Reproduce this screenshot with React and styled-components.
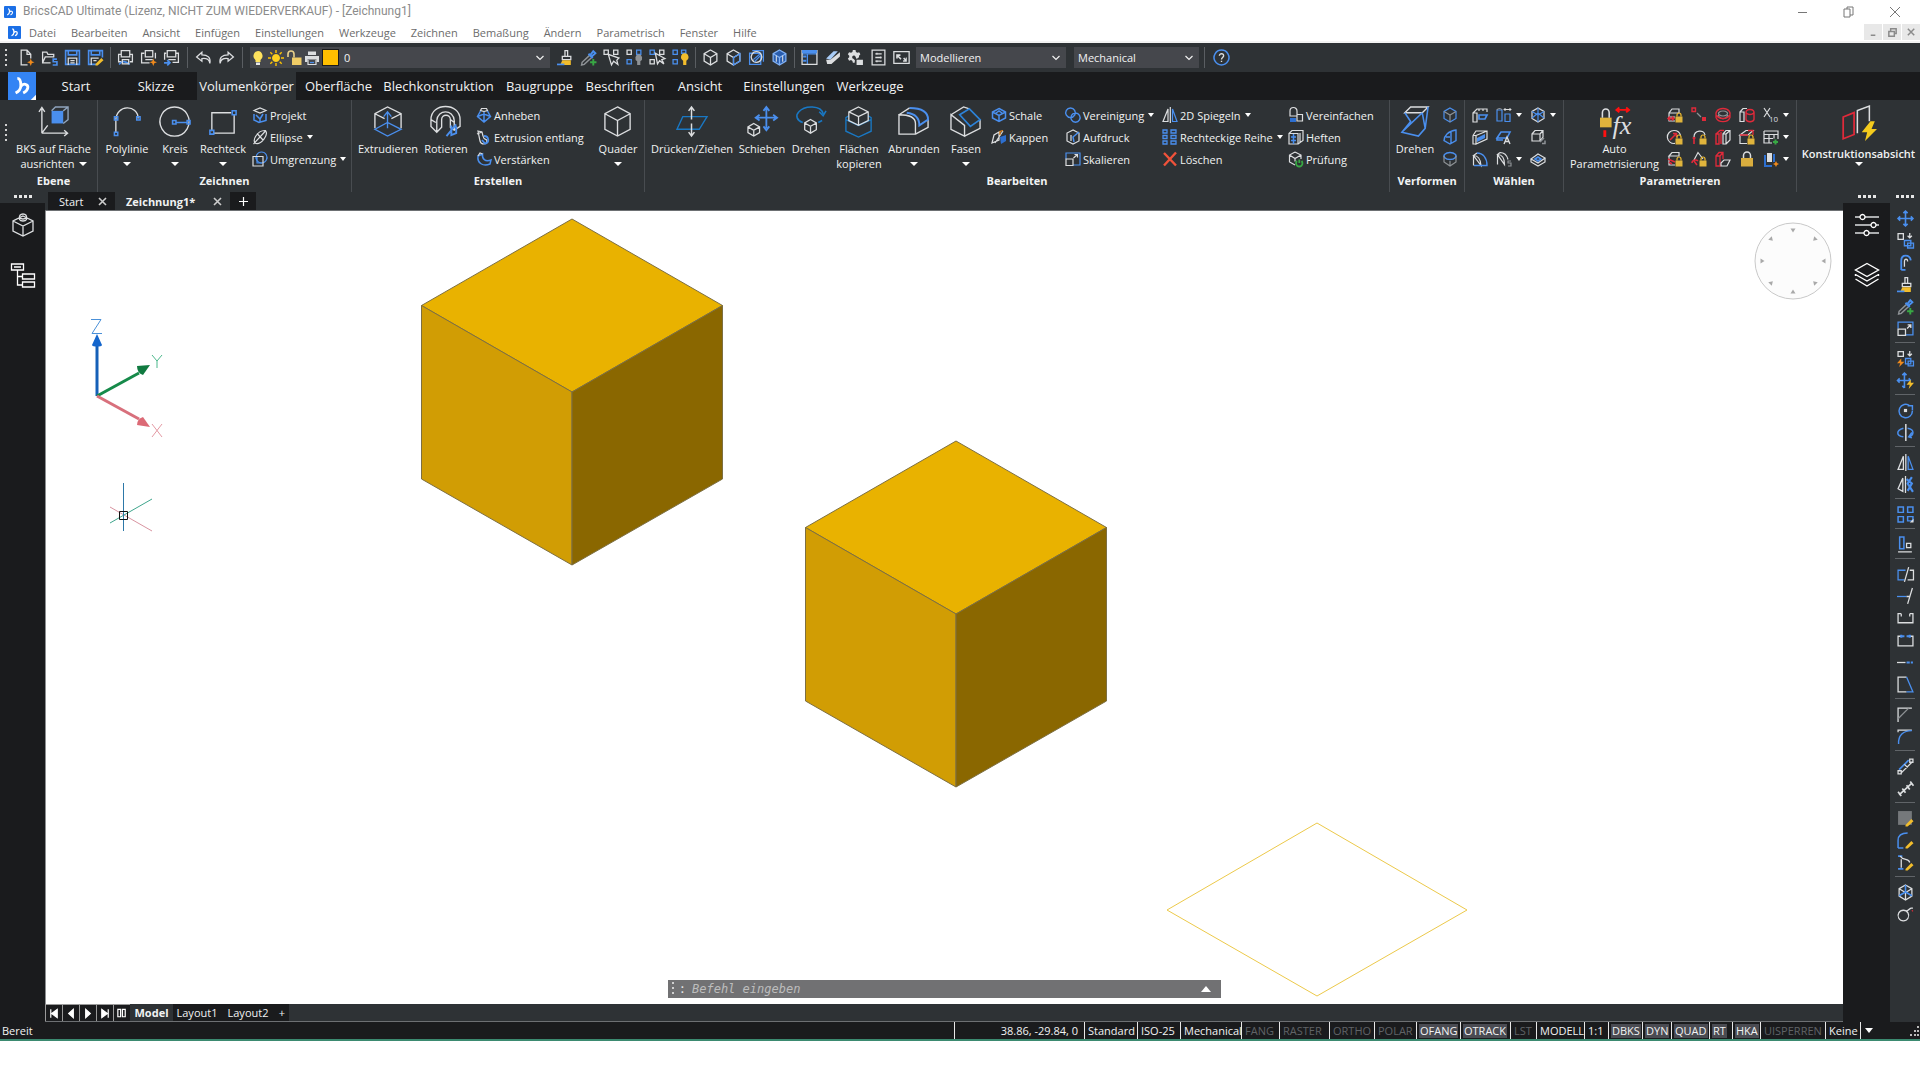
import React from "react";
import styled, { createGlobalStyle, css } from "styled-components";

const W = "#dcdee0";
const B = "#4a8fee";
const D = "#2d6fd0";
const Y = "#f2bd2c";
const O = "#f08a1c";
const R = "#e02a3a";
const G = "#38a844";
const K = "#8e9296";

const color = {
  bar: "#2e3235",
  dark: "#1a1b1d",
  field: "#45474c",
  line: "#484c50",
  text: "#f1f2f3",
};

const s = (stroke, d, w = 1.2) => ({ stroke, d, w });
const f = (fill, d) => ({ fill, d });

/* ---------- glyph data, 16 x 16 unless listed in LARGE ---------- */
const CUBE = "M8 1 14 4.4V11.4L8 15 2 11.4V4.4ZM2 4.4 8 8 14 4.4M8 8V15";
const LOCK = [f("#e0b43c", "M8.5 9.5h7v6h-7z"), s(Y, "M10 9.5V8a2 2 0 0 1 4 0v1.5")];
const PENCIL = [f(Y, "M8 14 13.500 8.500 15.500 10.500 10 15.500H8z")];
const BOLT = f(O, "M4 8 0 12.500h3L2 16l5-5H4z");

const GLYPHS = {
  new: [s(W, "M12 9V5L8.500 1H3v14h6M8.500 1v4H12"), f(O, "M12 9l1 2.500 2.500 1-2.500 1-1 2.500-1-2.500-2.500-1 2.500-1z")],
  open: [s(W, "M9 13H1.500V3h4l1 2H12v2.500M1.500 13 4 7.500h8.500"), s(B, "M15 9.500h-3.500V12H15v3h-4", 1.500)],
  save: [s(B, "M1.500 1.500h13v13h-13zM4 1.500v4h8v-4", 1.500), s(W, "M4 15V8.500h8V15M6 11h4M6 13h4")],
  saveas: [s(B, "M14.500 8V1.500h-13v13H9M4 1.500v4h8v-4", 1.500), s(W, "M4 15V8.500h7M6 11h3"), ...PENCIL],
  preview: [s(W, "M4 1.500h8v6H4zM4 5H1.500v7H4M12 5h2.500v7H12"), s(B, "M2 14.500c3-4 6-3 10 0", 1.500), s(W, "M5 10h6v4H5z")],
  publish: [s(W, "M5 1.500h7v6H5zM4 4H1.500v9H9M5 10h7M14.500 3.500V9"), f(O, "M12.500 9l1 2.500 2.500 1-2.500 1-1 2.500-1-2.500-2.500-1 2.500-1z")],
  plot: [s(W, "M4 1.500h8v6H4zM3 4H1.500v6M12 4h2.500v8.500H9M5 10h7"), s(B, "M1 13h5M4 10.500 6.500 13 4 15.500", 1.600)],
  undo: [s(W, "M6.500 3 1.500 7.500l5 4V9c4-.5 7 .5 7.500 4.500C15 8 12 5.500 6.500 5.500z")],
  redo: [s(W, "M9.500 3l5 4.500-5 4V9C5.500 8.500 2.500 9.500 2 13.500 1 8 4 5.500 9.500 5.500z")],
  bulb: [f("#ffe25e", "M8 1a5 5 0 0 0-2.500 9v2h5v-2A5 5 0 0 0 8 1z"), f("#e8e8e8", "M6 12.500h4V15H6z")],
  sun: [f("#ffd21f", "M8 4a4 4 0 1 0 .01 0z"), s("#ffc400", "M8 0v3M8 13v3M0 8h3M13 8h3M2.300 2.300l2 2M11.700 11.700l2 2M2.300 13.700l2-2M11.700 4.300l2-2", 1.400)],
  unlock: [f("#f0cc66", "M6 7.500h9.500V15H6z"), s("#e9d08a", "M8 7.500V4a3 3 0 0 0-6 0v3", 1.600)],
  printer: [f(W, "M1 6h14v6h-2.500V9.500h-9V12H1zM4 1.500h8v3.500H4z"), s(W, "M4 10v4.500h8V10"), s(B, "M6 12.500h4")],
  brush: [s(W, "M7.500 7V1.500H10V7M5 7h8v3H5z"), f(Y, "M5 10.500h8V15H3z"), s(B, "M0 14.500h7", 1.600)],
  dropper: [s(K, "M9 6 2 12.500 1.500 15l2.500-.5L11 8", 1.400), s(B, "M8 4.500 12 8.500M9.500 6l3-4 2 2-3.500 3", 1.800), s(G, "M12.500 9.500v6M9.500 12.500h6", 1.800)],
  selA: [s(W, "M1 1h4v4H1zM10 1h4v4h-4z"), s(W, "M5 5l3 10 2-3.500 4 3-1-4 2-2z")],
  selB: [s(W, "M1 1h4v4H1z"), s(B, "M10 1h4v4h-4zM1 10h4v4H1z"), f(K, "M12 5a3.500 3.500 0 0 0-1.500 6.500V15h3v-3.500A3.500 3.500 0 0 0 12 5z")],
  selC: [s(B, "M1 1h4v4H1z"), s(W, "M10 1h4v4h-4zM1 10h4v4H1zM6 4l2 10 2-3 4 3-2-4 3-1z")],
  selD: [s(B, "M1 1h4v4H1zM9 1h4v3H9zM1 10h4v4H1z"), f(Y, "M12 4a3.700 3.700 0 0 0-1.500 7V15h3v-4A3.700 3.700 0 0 0 12 4z")],
  cube: [s(W, CUBE)],
  cubeHalf: [s(W, CUBE), s(B, "M8 15 14 11.400V4.400L8 8z")],
  cubeSphere: [s(B, "M1.500 4v10.500H12V4zM4 1.500h10.500V12"), s(W, "M8 2.500a5 5 0 1 0 .01 0z"), s(B, "M5 10l6-5M6 12l6-6")],
  cubeBlue: [f("#2a5dad", "M8 1 14 4.400V11.400L8 15 2 11.400V4.400Z"), s("#7fb0f5", CUBE), s(W, "M5 6v6M11 6v6", 1)],
  layout: [s(B, "M1 4.500h14M6 4.500V15"), s(W, "M1 1.500h14v13H1z"), f(B, "M1 1h14v3H1zM2 6h3v2H2zM2 10h3v2H2z")],
  eraser: [f("#a9cdf8", "M2 9 9 2h4L6 10z"), f(W, "M2 10h4l9-7v4l-8 7H3z")],
  gear: [f(W, "M5.500 1h2.500l.4 1.800 1.300.8L11.400 3l1.200 2-1.300 1.300v1.400L9 9.500l-1-2.200a1.600 1.600 0 1 0-2 1.900l1.500 1.300-.3 2.500H5.500l-.4-1.800-1.300-.8L2 11 .8 9l1.300-1.300V6.300L.8 5 2 3l1.800.6 1.300-.8zM9 10h6v5H9z")],
  sheet: [s(W, "M2 1h12v14H2zM5 4.500h6M5 8h6M5 11.500h6M6.500 3.500v2M10 7v2M6.500 10.500v2")],
  frame: [s(W, "M.800 2.500h14.400v11H.8z"), f(W, "M3 5h4v1.500H5.500L8 9 7 10 4.500 7.500V9H3zM13 12H9.500v-1.500H11L9.500 9l1-1 1.500 1.500V8H13z")],
  help: [s(B, "M8 1a7 7 0 1 0 .01 0z", 1.400), s(W, "M6 6.300C6 3.700 10.300 4 10 6.500 9.800 8 8 8 8 9.800M8 11v1.300", 1.300)],
  project: [s(W, "M2 3.500 8 1l6 2.500L8 6z"), s(B, "M2 7v6l5 2.500 7-2V7M4 8l4 4 3-5M8 12v3", 1.500)],
  ellipse: [s(W, "M13.500 1.500C17 6 9 15.500 4 14.500-1 13 5 1 13.500 1.500ZM1.500 15 14 1.500M5 4.500l6 6.500")],
  boundary: [s(B, "M9.500 1a5.500 5.500 0 1 0 .01 0z"), s(W, "M1 5.500h10V15H1z"), s(B, "M5 6v6h5")],
  loft: [s(W, "M5.500 1.500h5l1 2-3.500 1-3.500-1z"), s(B, "M4.500 4 1.500 9.500 8 15l6.500-5.500L11.500 4M1.500 9.500 8 7l6.500 2.500M8 5v10", 1.500)],
  sweep: [s(W, "M2 2l4 1 1 4c1 5 4 2 4 5 0 4-6 4-7 0z"), s(B, "M8 7c5 0 6 7 1 7.500L6 11", 1.800), s(W, "M1 5l5-2")],
  thicken: [s(B, "M2 5c-1 7 5 11 12 8l1-4C9 11 6 8 6.500 3z", 1.500), s(W, "M2 5l2-3 2.500 1")],
  shell: [s(B, "M8 1.500 14.500 5v6L8 14.500 1.500 11V5ZM1.500 5 8 8.500 14.500 5M8 8.500v6M5 6l3-2 3 2", 1.500)],
  slice: [s(W, "M1 14 3 6l5-3v8zM4 14 12 2"), f(D, "M9 8l6-2v6l-5 3z"), s(O, "M9 6V2.500l3-1")],
  union: [s(B, "M5.500 1a4.800 4.800 0 1 0 .01 0zM10.500 6a4.600 4.600 0 1 0 .01 0z", 1.400)],
  imprint: [s(W, "M8 1 2 4v8l6 3 6-3V4ZM6 6v6"), s(B, "M14 3 8 8l1 5", 1.500)],
  scale: [s(B, "M1 8V2h14v12H8"), s(W, "M1 8h7v6.500H1zM8.500 7l4-3.500M9.500 3.500h3v3")],
  mirror: [s(W, "M6 2v12.500H1zM8.300 0v16"), s(B, "M10.500 2v12.500H15z")],
  array: [s(B, "M1 1h4v3H1zM9 1h5v3H9zM1 6.500h4v3H1zM9 6.500h5v3H9zM1 12h4v3H1zM9 12h5v3H9z", 1.300)],
  cross: [s("#f0523a", "M2 2 14 14.500M14 1.500 2 14.500", 2.400)],
  simplify: [s(W, "M2 9V4a3.500 3.500 0 0 1 7 0v5zM9 7.500h5.500V14H9z"), f(D, "M2 11h6v4H2z")],
  stitch: [s(W, "M1 4.500h9V15H1zM1 4.500 4 1.500h11v10L10 15M12 4v9"), s(B, "M5.500 5v10M3 8h5M3 11.500h5", 1.500)],
  check: [s(W, "M7 1 13 4v4M7 1 1.500 4v7L7 14M1.500 4 7 7.500 13 4M7 7.500v3"), s(G, "M9 10a3.200 3.200 0 1 0 4.500 0M11.300 8.500v3.500", 1.800)],
  defCube: [s(B, "M8 1 14 4.400V11.400L8 15 2 11.400V4.400Z"), s(K, "M2 4.400 8 8 14 4.400M8 8V15")],
  defCut: [s(B, "M14 1C6 2 2 7 2 11.500L8 15l6-3.500zM9 3v11M4 8h4", 1.400)],
  defCyl: [s(B, "M8 1.500a6 3.500 0 1 0 .01 0z", 1.400), s(K, "M2 5v6l6 4 6-4V5M8 10v5")],
  faceA: [s(W, "M1 6h4v9H1zM1 6l4-4h10v3M5 8V6M7 2v2M11 2v2"), s(B, "M7 8h8l-2 4H7z", 1.700)],
  faceB: [s(B, "M1 3h5v11H1zM9 7h5v7.500H9z"), s(K, "M1 3c1-2 4-2 5 0"), s(W, "M8 2.500h7M9.500 1 8 2.500 9.500 4M13.500 1 15 2.500 13.500 4", 1)],
  faceC: [s(W, "M8 1 14 4.400V11.400L8 15 2 11.400V4.400Z"), s(B, "M2 4.400 8 8 14 4.400M8 8V15M8 1v5l6 5M8 6l-6 5")],
  faceD: [s(W, "M1 6.500h3V15l11-5V2H4L1 6.500M4 6.500 15 2M1 6.500V15h3"), f(B, "M5 9l8-4v4l-8 4z")],
  faceE: [s(B, "M1 9 5 3h9l-3 6zM1 9v2h6", 1.600), s(W, "M8 15l3-7 3 7M9 12.500h4", 1.300)],
  faceF: [s(W, "M2 5h8v7H2zM2 5l3-3.500h8V8l-3 4M10 5l3-3.500"), s(K, "M10 13l4-4M12 14.500h3v-3", 1.500)],
  faceG: [s(W, "M1.500 14.500v-10L5 2M1.500 4.500c5 0 7 4 7.500 10z"), s(B, "M5 2c6 0 10 5 10 12.500H9M2 14.500h7", 1.400)],
  faceH: [s(W, "M1.500 13.500v-10L4 1.500M1.500 3.500c5 0 7 4 7 10zM4 1.500c5 0 7 3 8 7"), s(K, "M15 10h-3v2h3v3h-3")],
  faceI: [s(W, "M1 8 8 3l7 4-7 5zM1 8v3l7 4 7-4V7"), s(B, "M5 8l3-2 3 2-3 2z", 1.600)],
  lockFace: [s(W, "M2 6h10V2H5L2 6v8h6M2 10h6"), s(R, "M1 11.500h5M3 9.500l-2 2 2 2M5 9.500l2 2-2 2", 1.500), ...LOCK],
  link: [s(R, "M1 1h3.500v3.500H1z", 1.400), s(K, "M6 6l4 4"), f(R, "M11 10h4v4h-4z")],
  ring: [s(K, "M8 4a4.500 2.500 0 1 0 .01 0zM3 8c2 5 8 5 10 0"), s(R, "M8 1.500a7 5 0 1 0 .01 0zM1 6.500v4c2 5.500 12 5.500 14 0v-4", 1.300)],
  cylLock: [s(W, "M1 5h4v9.500H1zM1 5l3-3.500h4M5 5v9"), s(R, "M11 2.500a4 2.500 0 1 0 .01 0zM7 5v7.500c1 3 7 3 8 0V5", 1.400)],
  circLock: [s(W, "M7 1.500a6.500 6.500 0 1 0 1 12.900"), s(W, "M7 1.500c4 0 6 3 6.500 5"), s(R, "M3 11l6-6M6 4.500h3.500V8", 1.500), ...LOCK],
  arcLock: [s(W, "M3 8c0-7 10-8 11-2"), s(R, "M3 8v7M1.500 9h3", 1.600), ...LOCK],
  walls: [s(R, "M1 5h3v10H1zM1 5l4-3.500h4M6 3v12", 1.400), s(W, "M8 5h3v10H8zM8 5l3-3.500h4V11l-4 4M11 5l4-3.500")],
  boxLock: [s(W, "M1 6h8l5-4.500H7ZM1 6v8.500h7"), s(R, "M1 6h8M9 1.500h5V6", 1.300), ...LOCK],
  table: [s(W, "M1 2h14v8M1 2v12h8M1 5.500h14M1 9.500h9M6 5.500V14M11 5.500v4"), s(G, "M10 13h5M12.500 10.500v5", 2)],
  planeLock: [s(W, "M2 5h10V1.500H5ZM2 5v9h6"), s(R, "M1 8l7 3M5 13l-3-2", 1.600), ...LOCK],
  cornerLock: [s(W, "M3 9 7 1.500 12 8"), s(R, "M1 12c0-3 4-4 6-2M3 10l3 4", 1.500), ...LOCK],
  wallBox: [s(R, "M1 5h4v10H1zM1 5l3-3.500h4V8M5 5l3-3.500", 1.300), s(W, "M6 12l3-3h6l-3 6H6z")],
  bigLock: [f("#d9ad3e", "M2 7h12v8.500H2z"), s(W, "M4.500 7V4.500a3.500 3.500 0 0 1 7 0V7", 1.500)],
  column: [s(D, "M2 4v11h7M11 3v8", 2), f(W, "M4 2h5v9H4z"), f(O, "M13 10l1 2 2 1-2 1-1 2-1-2-2-1 2-1z")],
  move: [s(B, "M8 1v14M1 8h14M6 3l2-2 2 2M6 13l2 2 2-2M3 6 1 8l2 2M13 6l2 2-2 2", 1.500)],
  copy: [s(W, "M1 1.500h5V7H1zM12 1v4M10 3.500l2 2 2-2"), s(B, "M7 8h6v5H7zM10 10.500h5.500V15H10z", 1.300)],
  offset: [s(B, "M4 15V6c0-6 8-6 9 0M4 15h4", 1.700), s(W, "M7 12V7c0-3 3-3 3 0")],
  scaleBox: [s(B, "M1 8V2h14v12H8"), s(W, "M1 8.500h7v6H1zM9.500 8l3.500-3.500M10 4.500h3v3")],
  copyBolt: [s(W, "M1 1.500h5V6H1zM12 1v4M10 3.500l2 2 2-2"), s(B, "M8 8h5v5H8zM10.500 10.500h5V15h-5z"), BOLT],
  moveBolt: [s(B, "M7 1v14M.5 8h12M5 3l2-2 2 2M5 13l2 2M2.500 6l-2 2 2 2M11 6l2 2", 1.500), f(Y, "M13 7l-4 5h3l-1 4 5-6h-3z")],
  rotate: [s(B, "M12 3.500a6.300 6.300 0 1 0 2.500 5M10 3.500h4.500V8", 1.400), f(W, "M6.500 6.500h3v3h-3z")],
  rotate3d: [s(B, "M6 4C-1 6-1 11 6 12M10 4c7 1 6 7 1 8M14 8l-3 4 3 1", 1.400), s(W, "M8.300 0v16", 1.400)],
  mirror3d: [s(W, "M5.500 2v12.500L1 12zM8 0v16"), s(B, "M9 3l5 4-4 7M14 1l-4 6 5 8", 2)],
  arrayPolar: [s(B, "M1 1h5v5H1zM10 1h5v5h-5zM1 10h5v5H1zM10 10h5v4h-5z", 1.400), f(W, "M15.500 12v3.500H12z")],
  align: [s(B, "M2.500 1h4v11h-4z", 1.400), s(W, "M9 7h4v4H9zM1 15h13")],
  trimBox: [s(B, "M8 4H1v9h6"), s(W, "M11 1 7 15M12 4h3.500v9H10")],
  trim: [s(B, "M0 8h9"), s(W, "M14.500 0 10 15M9 8h3")],
  extend: [s(W, "M4 3.500H1V12h14V3.500h-3M4 3.500V6M12 3.500V6")],
  extendBlue: [s(W, "M4 4H1v9h14V4h-3"), s(B, "M4 4h3M9 4h3M4 2.500v3M12 2.500v3", 2)],
  lengthen: [s(W, "M0 8h8"), s(B, "M9 8h3M13 8h2", 1.800)],
  stretch: [s(W, "M9 1H1v14h8"), s(B, "M9 1l6 14H9", 1.200)],
  chamfer: [s(W, "M1 15V2h13"), s(K, "M1 12 11 2")],
  fillet: [s(W, "M1 4V2h13"), s(B, "M1.500 15C1 7 6 2.500 14 2.500", 1.300)],
  break: [s(B, "M2 11 11 2", 1.600), s(W, "M4 14 14 4M1 12h3v3H1zM12 1h3v3h-3zM7 6l3 3")],
  divide: [s(W, "M2 14 14 3M1 11l3 4M5 8l3 4M9 5l3 4M12.500 1.500l3 4", 1.600)],
  hatch: [f("#75787b", "M1 1h13v13H1z"), ...PENCIL],
  filletEdit: [s(B, "M1 15V8c0-5 4-7 9-7M1 15h5", 1.400), ...PENCIL],
  plineEdit: [s(B, "M1 2h4M1 14h5", 1.500), s(W, "M3 2c3 5 8 1 9 6M4 5v8"), ...PENCIL],
  solidEdit: [s(W, CUBE), s(B, "M2 11 8 7.500 14 11M8 1v7", 1.500)],
  balloon: [s(W, "M6 4a5 5 0 1 0 .01 0zM9 5l4-3M13 2h2"), s(R, "M14 4l1 1", 1)],
};

const LARGE = {
  ucs: [s(W, "M4 28V3M1 6 4 1.500 7 6M4 28h26M27 25l3.500 3-3.500 3M4 28l6-8", 1.400), f(B, "M14 5h12v13H14z"), s("#8fa4bd", "M14 5 18 1h13v13l-5 4M26 5l5-4", 1.400)],
  polyline: [s(W, "M5 27V15C5-2 28-2 28 13", 1.400), s(B, "M3.500 11h3.500v3.500H3.500zM26.500 11H30v3.500h-3.500zM3.500 27H7v3.500H3.500z", 1.500)],
  circle: [s(W, "M16 1a15 15 0 1 0 .01 0z", 1.400), s(B, "M14 15h3.500v3.500H14zM29 15h3v3.500h-3zM18 17h11", 1.600)],
  rect: [s(W, "M5 26V7h20M28 9v19H7", 1.400), s(B, "M26 5h4v4h-4zM3 25h4v4H3z", 1.600)],
  extrude: [s(W, "M3 23V8L16 1 30 8v15M3 8l10 5M30 8l-10 5", 1.400), s(B, "M16 23V7M12 11l4-5 4 5M3 24l13-7 14 7-14 7z", 1.400)],
  revolve: [s(W, "M1 21V14C1-4 31-4 31 14v7l-6 4-4-3v-8c0-6-9-6-9 0v8l-5 5zM7 26V15C8 3 24 3 25 15v10M1 14l5 3M21 14l4 3", 1.400), s(B, "M17 31l10-12M22 20v10l5-2v-7", 2)],
  box: [s(W, "M16 1 29 8v16l-13 7L3 24V8ZM3 8l13 7 13-7M16 15v16", 1.400)],
  push: [s("#1978c4", "M7 11h25l-8 13H1z", 1.400), s(W, "M16 14V2M13 5l3-4 3 4M16 18v12M13 27l3 4 3-4", 1.500)],
  shift: [s(B, "M21 2v21M11 12h21M18 5l3-4 3 4M18 21l3 4 3-4M14 9l-4 3 4 3M28 9l4 3-4 3", 1.900), s(W, "M8 18l6 3.500v6L8 31l-6-3.500v-6ZM2 21.500 8 25l6-3.500M8 25v6", 1.300)],
  turn: [s("#1978c4", "M8 17C2 15 0 10 4 6 10-1 27-1 29 8M25 6l4 4 3-5M24 17l4-2", 1.600), s(W, "M16 14l6 3.500v7L16 28l-6-3.500v-7ZM10 17.500l6 3.500 6-3.500M16 21v7", 1.300)],
  facecopy: [s("#1978c4", "M6 10 3 12v14l13 6 13-6V12l-3-2M3 14l13 6 13-6", 1.400), s(W, "M16 1 26 6v9l-10 5L6 15V6ZM6 6l10 5 10-5M16 11v9", 1.300)],
  round: [s(W, "M1 9v20h17V18c0-5-5-9-17-9ZM1 9 12 2M18 29l13-7V14", 1.400), s(B, "M12 2c12 0 19 4 19 12l-9 6c0-7-4-12-13-13", 2)],
  chamfer: [s(W, "M1 9v15l14 7V20ZM1 9 14 1l6 2M15 31l16-8V14", 1.400), s("#2d83d8", "M20 3 31 14l-10 7L10 9z", 1.700)],
  twist: [s(W, "M6 7 12 1h18l-6 6z", 1.400), s(B, "M6 7 12 16 3 27l17 4 7-8L30 1M24 7 3 27M27 23 24 7", 1.600)],
  auto: [f("#e0b43c", "M1 12h12v10H1z"), s(W, "M3.500 12V7a3.500 4 0 0 1 7 0v5", 1.600), s("#ff1010", "M18 4h13M21 1.500 18 4l3 2.500M28 1.500 31 4l-3 2.500", 2), s("#ff1010", "M6 25v7", 3)],
  intent: [s(R, "M2 11l10-4v20L2 31z", 1.600), s(W, "M15 26V5l11-4v14", 1.400), f("#f4cb1d", "M27 15l-8 10h5l-2 8 11-11h-5l3-7z")],
};

/* ---------- primitives ---------- */
const Global = createGlobalStyle`
  *, *::before, *::after { box-sizing: border-box; }
  body { margin: 0; background: #fff; }
  button, input, select { font: inherit; color: inherit; }
  button { border: 0; padding: 0; background: none; cursor: default; }
`;

const Svg = styled.svg`
  display: block;
  flex: none;
  fill: none;
  overflow: visible;
`;

function Glyph({ name, size = 17 }) {
  const large = LARGE[name] && size > 20;
  const shapes = large ? LARGE[name] : GLYPHS[name];
  return (
    <Svg width={size} height={size} viewBox={large ? "0 0 33 33" : "0 0 16 16"} aria-hidden="true">
      {shapes.map((p, i) => (
        <path key={i} d={p.d} fill={p.fill || "none"} stroke={p.stroke} strokeWidth={p.w} />
      ))}
      {name === "auto" && (
        <text x="14" y="29" fill={W} fontFamily="Liberation Serif, serif" fontStyle="italic" fontSize="27">fx</text>
      )}
    </Svg>
  );
}

const Caret = styled.span`
  width: 0;
  height: 0;
  flex: none;
  margin: 0 ${(p) => p.$gap || 0}px;
  border: solid transparent;
  border-width: 4px ${(p) => (p.$gap ? 3 : 4)}px 0;
  border-top-color: #fff;
`;

const Page = styled.div`
  min-height: 100vh;
  padding-bottom: 39px;
  display: flex;
  flex-direction: column;
  background: #fff;
  color: ${color.text};
  font: 11px/15px "Open Sans", "Noto Sans", sans-serif;
`;

/* ---------- title and menu ---------- */
const TitleBar = styled.header`
  display: flex;
  align-items: center;
  height: 23px;
  padding: 0 14px 0 4px;
  gap: 7px;
  color: #8b8b8b;
`;

const Title = styled.h1`
  flex: 1;
  margin: 0;
  font-family: Roboto, "Open Sans", sans-serif;
  font-size: 12px;
  font-weight: 400;
`;

const WindowButtons = styled.div`
  display: flex;
  gap: 24px;
  button { width: 22px; height: 16px; display: grid; place-items: center; }
`;

const MenuBar = styled.nav`
  display: flex;
  align-items: center;
  gap: 1px;
  height: 20px;
  padding-left: 8px;
  color: #6c6c6c;
  border-bottom: 2px solid #f3f3f3;
`;

const MenuItem = styled.button`
  padding: 0 7px;
`;

const MdiButtons = styled.div`
  display: flex;
  gap: 1px;
  margin-left: auto;
  button { width: 18px; height: 16px; background: #e8e8e8; display: grid; place-items: center; }
`;

const LogoBox = styled.span`
  display: block;
  width: ${(p) => p.$size}px;
  height: ${(p) => p.$size}px;
  background: ${(p) => (p.$plain ? "transparent" : "#1b6fe6")};
  border-radius: 1px;
  flex: none;
`;

function Logo({ size, plain }) {
  return (
    <LogoBox $size={size} $plain={plain}>
      <Svg width={size} height={size} viewBox="0 0 24 24" aria-hidden="true">
        <path d="M8 5.500C11 5.500 11 9 11 11.500 11 15 8.500 17 6.500 18M11 12.500c2-3.500 6.500-2 6 1-.4 2.500-3 4-4 4.500" stroke="#fff" strokeWidth="2.400" />
        {plain && <path d="M24 19.500V24h-4.500z" fill="#fff" />}
      </Svg>
    </LogoBox>
  );
}

/* ---------- quick access ---------- */
const QuickBar = styled.div`
  display: flex;
  align-items: center;
  height: 29px;
  background: ${color.bar};
`;

const Grip = styled.span`
  flex: none;
  ${(p) =>
    p.$across
      ? css`width: 18px; height: 3px; margin: ${p.$margin || "0"};
          background: repeating-linear-gradient(90deg, #e6e6e6 0 3px, transparent 3px 5px);`
      : css`width: 2px; height: ${p.$h || 17}px; margin: ${p.$margin || "0"};
          background: repeating-linear-gradient(180deg, #d0d0d0 0 2px, transparent 2px 5px);`}
`;

const ToolButton = styled.button`
  width: 23px;
  height: 22px;
  display: grid;
  place-items: center;
  flex: none;
`;

const VRule = styled.span`
  width: 1px;
  height: 21px;
  background: #5a5e62;
  margin: 0 ${(p) => p.$gap || 4}px;
  flex: none;
`;

const Field = styled.label`
  display: flex;
  align-items: center;
  height: 21px;
  width: ${(p) => p.$w}px;
  margin: 0 ${(p) => p.$after || 0}px 0 ${(p) => p.$gap || 0}px;
  padding: 0 6px 0 ${(p) => (p.$after ? 0 : 4)}px;
  background: ${color.field};
  flex: none;
`;

const Pick = styled.select`
  flex: 1;
  min-width: 0;
  appearance: none;
  border: 0;
  padding: 0;
  background: transparent;
  outline: 0;
`;

const LayerStates = styled.span`
  display: flex;
  gap: 2px;
  align-items: center;
  margin-right: 5px;
`;

const Swatch = styled.span`
  width: 17px;
  height: 17px;
  background: #ffbf00;
  border: 1px solid #1c1c1c;
`;

function Chevron() {
  return (
    <Svg width="8" height="6" viewBox="0 0 8 6" aria-hidden="true">
      <path d="M.5 1 4 4.500 7.500 1" stroke="#f1f1f1" strokeWidth="1.200" />
    </Svg>
  );
}

/* ---------- ribbon ---------- */
const TabStrip = styled.nav`
  display: flex;
  height: 28px;
  padding-left: 8px;
  gap: 1px;
  background: ${color.dark};
`;

const AppButton = styled.button`
  width: 28px;
  display: grid;
  place-items: center;
  background: #3484f4;
`;

const RibbonTab = styled.button`
  width: ${(p) => p.$w}px;
  font-size: 13px;
  line-height: 28px;
  white-space: nowrap;
  text-align: center;
  background: ${(p) => (p.$active ? color.bar : "transparent")};
`;

const RibbonBar = styled.section`
  display: flex;
  height: 92px;
  background: ${color.bar};
`;

const Group = styled.div`
  display: flex;
  flex-direction: column;
  flex: ${(p) => (p.$w ? "none" : 1)};
  width: ${(p) => (p.$w ? p.$w + "px" : "auto")};
  padding-top: 4px;
  border-right: 1px solid ${color.line};
  &:last-child { border-right: 0; }
`;

const GroupBody = styled.div`
  display: flex;
  height: 68px;
  padding-left: ${(p) => p.$pad || 0}px;
`;

const GroupTitle = styled.h2`
  margin: 0;
  text-align: center;
  font-size: 11px;
  line-height: 18px;
  font-weight: 700;
`;

const Large = styled.button`
  display: flex;
  flex-direction: column;
  align-items: center;
  width: ${(p) => (p.$w ? p.$w + "px" : "100%")};
  padding-top: ${(p) => (p.$wide ? 1 : 2)}px;
  font-weight: ${(p) => (p.$wide ? 600 : 400)};
  white-space: nowrap;
  flex: none;
`;

const Line = styled.span`
  display: flex;
  align-items: center;
  justify-content: center;
  height: ${(p) => p.$h || 15}px;
  gap: 4px;
  &:nth-of-type(1) { margin-top: ${(p) => p.$top || 3}px; }
`;

const Column = styled.div`
  display: flex;
  flex-direction: column;
  width: ${(p) => (p.$w ? p.$w + "px" : "auto")};
  padding-left: 4px;
  flex: none;
`;

const Small = styled.button`
  display: flex;
  align-items: center;
  height: 22px;
  gap: 2px;
  white-space: nowrap;
`;

function LargeButton({ icon, w, label, second, caret }) {
  return (
    <Large $w={w}>
      <Glyph name={icon} size={32} />
      <Line>{label}</Line>
      {(second || caret) && (
        <Line>
          {second}
          {caret && <Caret />}
        </Line>
      )}
    </Large>
  );
}

function SmallColumn({ w, items }) {
  return (
    <Column $w={w}>
      {items.map(([icon, label, caret]) => (
        <Small key={icon} aria-label={label || icon}>
          <Glyph name={icon} size={16} />
          {label}
          {caret && <Caret $gap={2} />}
        </Small>
      ))}
    </Column>
  );
}

function RibbonGroup({ w, pad, title, children }) {
  return (
    <Group $w={w}>
      <GroupBody $pad={pad}>{children}</GroupBody>
      {title && <GroupTitle>{title}</GroupTitle>}
    </Group>
  );
}

/* ---------- workspace ---------- */
const Workspace = styled.main`
  display: flex;
  flex: 1;
  background: ${color.bar};
`;

const SidePanel = styled.aside`
  width: ${(p) => p.$w}px;
  display: flex;
  flex-direction: column;
  align-items: center;
  flex: none;
`;

const PanelBody = styled.div`
  align-self: stretch;
  flex: 1;
  display: flex;
  flex-direction: column;
  align-items: center;
  gap: 24px;
  padding-top: 9px;
  background: ${color.dark};
`;

const PanelButton = styled.button`
  width: 26px;
  height: 26px;
  display: grid;
  place-items: center;
`;

const Center = styled.section`
  flex: 1;
  min-width: 0;
  display: flex;
  flex-direction: column;
  border-bottom: 1px solid #6d7073;
`;

const DocTabs = styled.div`
  display: flex;
  height: 19px;
  padding-left: 3px;
  border-bottom: 1px solid #6d7073;
`;

const DocTab = styled.div`
  display: flex;
  align-items: center;
  justify-content: space-between;
  width: ${(p) => p.$w}px;
  padding: 0 7px 0 11px;
  font-weight: ${(p) => (p.$active ? 700 : 400)};
  background: ${(p) => (p.$active ? color.bar : color.dark)};
  button { width: 11px; height: 18px; display: grid; place-items: center; }
`;

const AddTab = styled.button`
  width: 26px;
  display: grid;
  place-items: center;
  background: ${color.dark};
`;

const Canvas = styled.div`
  position: relative;
  flex: 1;
  background: #fff;
  border-left: 1px solid #8d8f91;
  overflow: hidden;
`;

const Scene = styled.svg`
  position: absolute;
  inset: 0;
  width: 100%;
  height: 100%;
`;

const LookFrom = styled.svg`
  position: absolute;
  top: 11px;
  right: 11px;
`;

const CommandLine = styled.label`
  position: absolute;
  left: 34.6%;
  bottom: 6px;
  width: 553px;
  height: 18px;
  display: flex;
  align-items: center;
  padding: 0 10px 0 4px;
  background: #717173;
  color: #e4e4e4;
  font-family: "DejaVu Sans Mono", "Liberation Mono", monospace;
  font-size: 12px;
  input {
    flex: 1;
    border: 0;
    padding: 0;
    margin-left: 6px;
    background: none;
    font-style: italic;
    outline: 0;
  }
  input::placeholder { color: #bdbdbd; opacity: 1; }
`;

const LayoutTabs = styled.div`
  display: flex;
  height: 17px;
  line-height: 17px;
`;

const NavButton = styled.button`
  width: 17px;
  display: grid;
  place-items: center;
  background: ${color.dark};
  border-top: 1px solid #9a9a9a;
  border-left: 1px solid #9a9a9a;
`;

const LayoutTab = styled.button`
  width: ${(p) => p.$w}px;
  font-weight: ${(p) => (p.$active ? 700 : 400)};
  background: ${(p) => (p.$active ? color.bar : color.dark)};
`;

const ModifyBar = styled.div`
  display: flex;
  flex-direction: column;
  align-items: center;
  padding-top: 8px;
  button { height: 22px; }
  hr { width: 20px; height: 1px; margin: 3px 0 4px; border: 0; background: #606468; }
`;

/* ---------- status bar ---------- */
const StatusBar = styled.footer`
  display: flex;
  align-items: center;
  height: 19px;
  background: ${color.dark};
  border-bottom: 2px solid #3b8a70;
  line-height: 17px;
`;

const Message = styled.span`
  flex: 1;
  padding-left: 2px;
`;

const Cell = styled.button`
  width: ${(p) => p.$w}px;
  flex: none;
  height: 17px;
  display: flex;
  align-items: center;
  justify-content: ${(p) => (p.$end ? "flex-end" : "flex-start")};
  padding: 0 ${(p) => (p.$end ? 5 : 2)}px;
  border-left: 1px solid #e8e8e8;
  white-space: nowrap;
  color: ${(p) => (p.$off ? "#606367" : color.text)};
  span {
    padding: 0 1px;
    line-height: 14px;
    background: ${(p) => (p.$on ? "#4a4b52" : "transparent")};
  }
`;

const EndCell = styled.span`
  width: 60px;
  height: 17px;
  display: flex;
  align-items: center;
  justify-content: space-between;
  padding: 0 1px 0 4px;
  border-left: 1px solid #e8e8e8;
`;

/* ---------- content ---------- */
const MENU = ["Datei", "Bearbeiten", "Ansicht", "Einfügen", "Einstellungen", "Werkzeuge", "Zeichnen", "Bemaßung", "Ändern", "Parametrisch", "Fenster", "Hilfe"];

const TABS = [
  ["Start", 78], ["Skizze", 80], ["Volumenkörper", 99], ["Oberfläche", 83], ["Blechkonstruktion", 115],
  ["Baugruppe", 85], ["Beschriften", 74], ["Ansicht", 84], ["Einstellungen", 82], ["Werkzeuge", 88],
];

const MODIFY = [
  ["move", "copy", "offset", "brush", "dropper", "scaleBox"],
  ["copyBolt", "moveBolt"],
  ["rotate", "rotate3d"],
  ["mirror", "mirror3d"],
  ["arrayPolar"],
  ["align"],
  ["trimBox", "trim", "extend", "extendBlue", "lengthen", "stretch"],
  ["chamfer", "fillet"],
  ["break", "divide"],
  ["hatch", "filletEdit", "plineEdit"],
  ["solidEdit", "balloon"],
];

const STATUS = [
  ["38.86, -29.84, 0", 130, "end"], ["Standard", 53], ["ISO-25", 43], ["Mechanical", 61],
  ["FANG", 38, "off"], ["RASTER", 50, "off"], ["ORTHO", 45, "off"], ["POLAR", 42, "off"],
  ["OFANG", 44, "on"], ["OTRACK", 50, "on"], ["LST", 26, "off"], ["MODELL", 48], ["1:1", 24],
  ["DBKS", 34, "on"], ["DYN", 29, "on"], ["QUAD", 38, "on"], ["RT", 23, "on"], ["HKA", 28, "on"],
  ["UISPERREN", 65, "off"], ["Keine", 35],
];

const NAV = ["M3 2v9M10 2v9L4 6.500z", "M9 2v9L4 6.500z", "M4 2v9l5-4.500z", "M10 2v9M3 2v9l6-4.500z", "M2 2h3v8H2zM7 2h3v8H7z"];

function Tools({ names }) {
  return names.map((n) => (
    <ToolButton key={n} aria-label={n}>
      <Glyph name={n} size={17} />
    </ToolButton>
  ));
}

function Solid({ x, y }) {
  return (
    <g transform={`translate(${x} ${y})`} stroke="#7d6f42" strokeWidth="1" strokeLinejoin="round">
      <path d="M0 0 150.500 86.500 0 173-150.500 86.500z" fill="#e9b200" />
      <path d="M-150.500 86.500 0 173V346L-150.500 260z" fill="#d19d04" />
      <path d="M150.500 86.500 0 173V346L150.500 260z" fill="#8a6700" />
    </g>
  );
}

function Drawing() {
  return (
    <Scene aria-label="Zeichnung">
      <Solid x={526} y={8} />
      <Solid x={910} y={230} />
      <path d="M1271 612 1421 699 1271 785 1121 699z" fill="none" stroke="#ecc94a" />
      <g fill="none" strokeWidth="3">
        <path d="M51 185V134" stroke="#1560b8" />
        <path d="M51 185 93 162" stroke="#168a4a" />
        <path d="M51 185 93 208" stroke="#d8707c" />
      </g>
      <path d="M51 123 46 134C46 136 56 136 56 134z" fill="#1466cc" />
      <path d="M104 154 91 155Q91 162 97 164z" fill="#107a40" />
      <path d="M104 216 97 206Q91 208 91 214z" fill="#dc6a76" />
      <g fill="none" strokeWidth="1">
        <path d="M45 108.500h10L46 122.500h10" stroke="#4a90d8" />
        <path d="M106 144l5 6 5-6M111 150v7" stroke="#4cb88c" />
        <path d="M106 213l10 13M116 213l-10 13" stroke="#e49aa4" />
        <path d="M64 296 106 320" stroke="#d894a0" />
        <path d="M64 312 106 288" stroke="#3fa58c" />
        <path d="M77.500 272v48" stroke="#2d78a8" />
        <path d="M73.500 300.500h8v8h-8z" stroke="#111" />
      </g>
    </Scene>
  );
}

export default function App() {
  return (
    <Page>
      <Global />
      <TitleBar>
        <Logo size={12} />
        <Title>BricsCAD Ultimate (Lizenz, NICHT ZUM WIEDERVERKAUF) - [Zeichnung1]</Title>
        <WindowButtons>
          {["M1 6.500h9", "M1 3h6v8H1zM4 3V1h6v8H7", "M1 1l10 10M11 1 1 11"].map((d, i) => (
            <button key={d} aria-label={["Minimieren", "Wiederherstellen", "Schließen"][i]}>
              <Svg width="12" height="12" viewBox="0 0 12 12"><path d={d} stroke="#777" /></Svg>
            </button>
          ))}
        </WindowButtons>
      </TitleBar>
      <MenuBar>
        <Logo size={13} />
        {MENU.map((m) => <MenuItem key={m}>{m}</MenuItem>)}
        <MdiButtons>
          {["M3 9h5", "M2 5h6v5H2zM4 5V2h6v5H8", "M2 2l7 7M9 2 2 9"].map((d, i) => (
            <button key={d} aria-label={["Fenster minimieren", "Fenster wiederherstellen", "Fenster schließen"][i]}>
              <Svg width="11" height="11" viewBox="0 0 12 12"><path d={d} stroke="#8a8a8a" strokeWidth="1.600" /></Svg>
            </button>
          ))}
        </MdiButtons>
      </MenuBar>

      <QuickBar>
        <Grip $margin="0 8px 0 5px" />
        <Tools names={["new", "open", "save", "saveas"]} />
        <VRule $gap={3} />
        <Tools names={["preview", "publish", "plot"]} />
        <VRule $gap={4} />
        <Tools names={["undo", "redo"]} />
        <VRule $gap={4} />
        <Field $w={300} $gap={3} $after={4}>
          <LayerStates>
            <Glyph name="bulb" size={16} />
            <Glyph name="sun" size={16} />
            <Glyph name="unlock" size={16} />
            <Glyph name="printer" size={16} />
            <Swatch />
          </LayerStates>
          <Pick aria-label="Layer"><option>0</option></Pick>
          <Chevron />
        </Field>
        <Tools names={["brush", "dropper", "selA", "selB", "selC", "selD"]} />
        <VRule $gap={3} />
        <Tools names={["cube", "cubeHalf", "cubeSphere", "cubeBlue"]} />
        <VRule $gap={3} />
        <Tools names={["layout", "eraser", "gear", "sheet", "frame"]} />
        <Field $w={150} $gap={3}>
          <Pick aria-label="Arbeitsbereich"><option>Modellieren</option></Pick>
          <Chevron />
        </Field>
        <Field $w={125} $gap={8}>
          <Pick aria-label="Profil"><option>Mechanical</option></Pick>
          <Chevron />
        </Field>
        <VRule $gap={5} />
        <Tools names={["help"]} />
      </QuickBar>

      <TabStrip>
        <AppButton aria-label="BricsCAD"><Logo size={28} plain /></AppButton>
        {TABS.map(([t, w]) => (
          <RibbonTab key={t} $w={w} $active={t === "Volumenkörper"}>{t}</RibbonTab>
        ))}
      </TabStrip>

      <RibbonBar>
        <Grip $margin="24px 3px 0 5px" />
        <RibbonGroup w={88} title="Ebene">
          <LargeButton icon="ucs" w={87} label="BKS auf Fläche" second="ausrichten" caret />
        </RibbonGroup>
        <RibbonGroup w={254} pad={4} title="Zeichnen">
          <LargeButton icon="polyline" w={50} label="Polylinie" caret />
          <LargeButton icon="circle" w={46} label="Kreis" caret />
          <LargeButton icon="rect" w={50} label="Rechteck" caret />
          <SmallColumn items={[["project", "Projekt"], ["ellipse", "Ellipse", true], ["boundary", "Umgrenzung", true]]} />
        </RibbonGroup>
        <RibbonGroup w={293} pad={4} title="Erstellen">
          <LargeButton icon="extrude" w={64} label="Extrudieren" />
          <LargeButton icon="revolve" w={52} label="Rotieren" />
          <SmallColumn w={122} items={[["loft", "Anheben"], ["sweep", "Extrusion entlang"], ["thicken", "Verstärken"]]} />
          <LargeButton icon="box" w={48} label="Quader" caret />
        </RibbonGroup>
        <RibbonGroup w={745} pad={2} title="Bearbeiten">
          <LargeButton icon="push" w={90} label="Drücken/Ziehen" />
          <LargeButton icon="shift" w={50} label="Schieben" />
          <LargeButton icon="turn" w={48} label="Drehen" />
          <LargeButton icon="facecopy" w={48} label="Flächen" second="kopieren" />
          <LargeButton icon="round" w={62} label="Abrunden" caret />
          <LargeButton icon="chamfer" w={42} label="Fasen" caret />
          <SmallColumn w={74} items={[["shell", "Schale"], ["slice", "Kappen"]]} />
          <SmallColumn w={97} items={[["union", "Vereinigung", true], ["imprint", "Aufdruck"], ["scale", "Skalieren"]]} />
          <SmallColumn w={126} items={[["mirror", "2D Spiegeln", true], ["array", "Rechteckige Reihe", true], ["cross", "Löschen"]]} />
          <SmallColumn items={[["simplify", "Vereinfachen"], ["stitch", "Heften"], ["check", "Prüfung"]]} />
        </RibbonGroup>
        <RibbonGroup w={75} pad={2} title="Verformen">
          <LargeButton icon="twist" w={46} label="Drehen" />
          <SmallColumn items={[["defCube"], ["defCut"], ["defCyl"]]} />
        </RibbonGroup>
        <RibbonGroup w={99} pad={3} title="Wählen">
          <SmallColumn w={24} items={[["faceA"], ["faceD"], ["faceG"]]} />
          <SmallColumn w={34} items={[["faceB", "", true], ["faceE"], ["faceH", "", true]]} />
          <SmallColumn items={[["faceC", "", true], ["faceF"], ["faceI"]]} />
        </RibbonGroup>
        <RibbonGroup w={233} pad={2} title="Parametrieren">
          <LargeButton icon="auto" w={97} label="Auto" second="Parametrisierung" />
          <SmallColumn w={24} items={[["lockFace"], ["circLock"], ["planeLock"]]} />
          <SmallColumn w={24} items={[["link"], ["arcLock"], ["cornerLock"]]} />
          <SmallColumn w={24} items={[["ring"], ["walls"], ["wallBox"]]} />
          <SmallColumn w={24} items={[["cylLock"], ["boxLock"], ["bigLock"]]} />
          <Column>
            <Small aria-label="Dimension">
              <Svg width="16" height="16" viewBox="0 0 16 16">
                <path d="M1 1l6 9M7 1 1 10" stroke={W} strokeWidth="1.200" />
                <text x="6" y="15" fill={W} fontSize="8">10</text>
              </Svg>
              <Caret $gap={2} />
            </Small>
            <Small aria-label="Tabelle"><Glyph name="table" size={16} /><Caret $gap={2} /></Small>
            <Small aria-label="Säule"><Glyph name="column" size={16} /><Caret $gap={2} /></Small>
          </Column>
        </RibbonGroup>
        <RibbonGroup>
          <Large $wide>
            <Glyph name="intent" size={36} />
            <Line $top={5}>Konstruktionsabsicht</Line>
            <Line $h={6}><Caret /></Line>
          </Large>
        </RibbonGroup>
      </RibbonBar>

      <Workspace>
        <SidePanel $w={45}>
          <Grip $across $margin="3px 0 5px" />
          <PanelBody>
            <PanelButton aria-label="Bibliothek">
              <Svg width="24" height="24" viewBox="0 0 24 24">
                <path d="M12 3 22 8v10l-10 5L2 18V8ZM2 8l10 5 10-5M12 13v10M12 1a3.500 2.500 0 1 0 .01 0zM8.500 4v2.500c1 2 6 2 7 0V4" stroke={W} strokeWidth="1.300" />
              </Svg>
            </PanelButton>
            <PanelButton aria-label="Struktur">
              <Svg width="26" height="26" viewBox="0 0 26 26">
                <path d="M1.500 2h12v6h-12zM4 5h7M7.500 8v15h5M7.500 14.500h5M12.500 12h12v5h-12zM12.500 20h12v5h-12z" stroke="#fff" strokeWidth="1.300" />
              </Svg>
            </PanelButton>
          </PanelBody>
        </SidePanel>

        <Center>
          <DocTabs>
            <DocTab $w={67}>
              Start
              <button aria-label="Start schließen"><Svg width="9" height="9" viewBox="0 0 9 9"><path d="M1 1l7 7M8 1 1 8" stroke="#ccc" strokeWidth="1.600" /></Svg></button>
            </DocTab>
            <DocTab $w={115} $active>
              Zeichnung1*
              <button aria-label="Zeichnung1 schließen"><Svg width="9" height="9" viewBox="0 0 9 9"><path d="M1 1l7 7M8 1 1 8" stroke="#ccc" strokeWidth="1.600" /></Svg></button>
            </DocTab>
            <AddTab aria-label="Neue Zeichnung"><Svg width="9" height="9" viewBox="0 0 9 9"><path d="M4.500 0v9M0 4.500h9" stroke="#fff" strokeWidth="1.200" /></Svg></AddTab>
          </DocTabs>
          <Canvas>
            <Drawing />
            <LookFrom width="78" height="78" viewBox="-39 -39 78 78" aria-label="Ansicht wählen">
              <circle r="38" fill="#fcfcfc" stroke="#c9c9c9" />
              {[0, 45, 90, 135, 180, 225, 270, 315].map((a) => (
                <path key={a} d="M-2.500-32.500h5L0-28.500z" fill="#a9a9a9" transform={`rotate(${a})`} />
              ))}
            </LookFrom>
            <CommandLine>
              <Grip $h={15} $margin="0 5px 0 0" />:
              <input placeholder="Befehl eingeben" aria-label="Befehl" />
              <Svg width="10" height="6" viewBox="0 0 10 6"><path d="M0 6 5 0l5 6z" fill="#fff" /></Svg>
            </CommandLine>
          </Canvas>
          <LayoutTabs>
            {NAV.map((d, i) => (
              <NavButton key={d} aria-label={`Navigation ${i + 1}`}>
                <Svg width="12" height="13" viewBox="0 0 13 13"><path d={d} fill={i === 4 ? "none" : "#fff"} stroke="#fff" strokeWidth="1.300" /></Svg>
              </NavButton>
            ))}
            <LayoutTab $w={43} $active>Model</LayoutTab>
            <LayoutTab $w={48}>Layout1</LayoutTab>
            <LayoutTab $w={54}>Layout2</LayoutTab>
            <LayoutTab $w={14} aria-label="Layout hinzufügen">+</LayoutTab>
          </LayoutTabs>
        </Center>

        <SidePanel $w={47}>
          <Grip $across $margin="3px 0 5px" />
          <PanelBody>
            <PanelButton aria-label="Eigenschaften">
              <Svg width="26" height="26" viewBox="0 0 26 26">
                <path d="M1 5h5M11 5h14M1 13h16M22 13h3M1 21h9M15 21h10" stroke={W} strokeWidth="1.400" />
                <path d="M8.500 2.500a2.500 2.500 0 1 0 .01 0zM19.500 10.500a2.500 2.500 0 1 0 .01 0zM12.500 18.500a2.500 2.500 0 1 0 .01 0z" stroke="#fff" strokeWidth="1.400" />
              </Svg>
            </PanelButton>
            <PanelButton aria-label="Layer">
              <Svg width="26" height="26" viewBox="0 0 26 26">
                <path d="M13 1.500 24.500 8 13 14.500 1.500 8ZM1.500 12.500 13 19l11.500-6.500M1.500 17 13 24l11.500-7M1.500 12v2M24.500 12v2" stroke="#fff" strokeWidth="1.400" />
              </Svg>
            </PanelButton>
          </PanelBody>
        </SidePanel>

        <SidePanel $w={30}>
          <Grip $across $margin="3px 0 1px" />
          <ModifyBar>
            {MODIFY.map((set, i) => (
              <React.Fragment key={set[0]}>
                {i > 0 && <hr />}
                <Tools names={set} />
              </React.Fragment>
            ))}
          </ModifyBar>
        </SidePanel>
      </Workspace>

      <StatusBar>
        <Message>Bereit</Message>
        {STATUS.map(([label, w, kind]) => (
          <Cell key={label} $w={w} $end={kind === "end"} $off={kind === "off"} $on={kind === "on"}>
            <span>{label}</span>
          </Cell>
        ))}
        <EndCell>
          <Svg width="8" height="5" viewBox="0 0 8 5"><path d="M0 0h8L4 5z" fill="#fff" /></Svg>
          <Svg width="10" height="10" viewBox="0 0 10 10"><path d="M8 0h2v2H8zM5 4h2v2H5zM8 4h2v2H8zM1 8h2v2H1zM5 8h2v2H5zM8 8h2v2H8z" fill="#bbb" /></Svg>
        </EndCell>
      </StatusBar>
    </Page>
  );
}
